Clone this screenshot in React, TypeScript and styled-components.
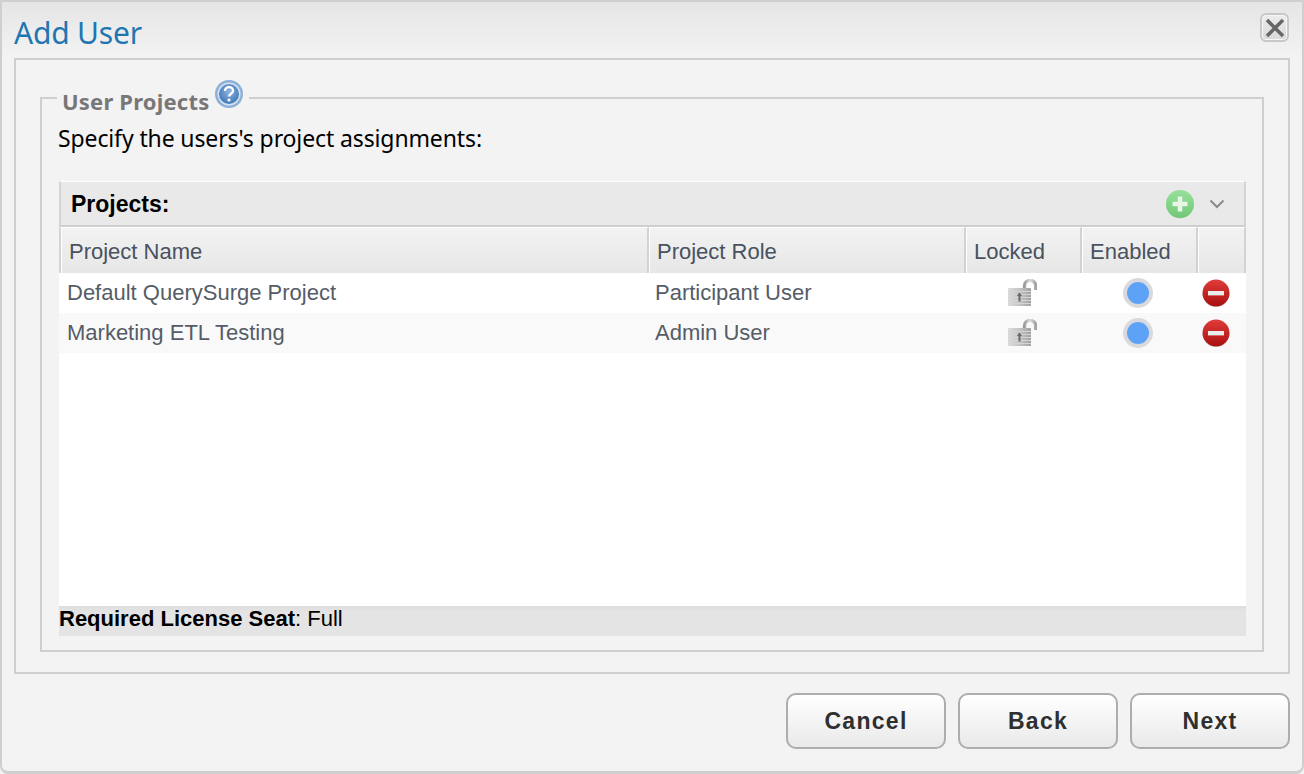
import styled, { createGlobalStyle } from 'styled-components';

const GlobalStyle = createGlobalStyle`
  html,
  body {
    margin: 0;
    padding: 0;
    background: #f3f3f3;
  }
  * {
    box-sizing: border-box;
  }
`;

const HEADER_COLUMNS = '590px 317px 116px 116px 48px';
const ROW_COLUMNS = '588px 317px 116px 116px 50px';
const ROW_FONT = '"Liberation Sans", Arial, sans-serif';
const TITLE_FONT = '"Noto Sans", "Open Sans", sans-serif';

const Dialog = styled.div`
  width: 1304px;
  height: 774px;
  border: solid #cfcfcf;
  border-width: 2px 2px 3px 2px;
  border-radius: 0 0 8px 8px;
  background: #f3f3f3;
  display: flex;
  flex-direction: column;
  overflow: hidden;
`;

const TitleBar = styled.div`
  height: 56px;
  padding: 0 12px;
  display: flex;
  justify-content: space-between;
  background: linear-gradient(#e5e5e5, #f3f3f3);
`;

const Title = styled.h1`
  margin: 11px 0 0;
  font: 400 30px/40px ${TITLE_FONT};
  letter-spacing: -0.2px;
  color: #1f76b1;
`;

const CloseButton = styled.button`
  width: 29px;
  height: 29px;
  margin: 11px 1px 0 0;
  padding: 0;
  border: 2px solid #c8c8c8;
  border-radius: 6px;
  background: linear-gradient(#ececec, #d8d8d8);
  box-shadow: inset 0 0 0 1px #f6f6f6;
  display: flex;
  align-items: center;
  justify-content: center;
`;

const Panel = styled.div`
  height: 616px;
  margin: 0 12px;
  padding: 24px 24px 20px;
  border: 2px solid #cfcfcf;
`;

const FieldSet = styled.fieldset`
  height: 568px;
  margin: 0;
  padding: 0 16px 14px 17px;
  border: 2px solid #cfcfcf;
  min-width: 0;
  display: flex;
  flex-direction: column;
`;

const Legend = styled.legend`
  padding: 0 5px 0 5px;
  margin-left: -2px;
  height: 28px;
  display: flex;
  align-items: flex-start;
  font: 700 22px/34px ${TITLE_FONT};
  color: #777;
  letter-spacing: 0.2px;
`;

const HelpIcon = styled.svg`
  width: 30px;
  height: 30px;
  margin: -5px 0 0 5px;
`;

const Intro = styled.p`
  margin: 8px 0 25px -1px;
  font: 400 23px/36px ${TITLE_FONT};
  letter-spacing: -0.12px;
  color: #000;
`;

const Grid = styled.div`
  flex: 1;
  display: flex;
  flex-direction: column;
  background: #fff;
`;

const GridCaption = styled.div`
  height: 46px;
  padding: 1px 19px 0 10px;
  border-top: 1px solid #fff;
  border-bottom: 2px solid #cfcfcf;
  border-left: 2px solid #d4d4d4;
  border-right: 2px solid #d4d4d4;
  background: #e9e9e9;
  display: flex;
  align-items: center;
  justify-content: space-between;
`;

const CaptionTitle = styled.span`
  font: 700 23px/28px ${ROW_FONT};
  color: #000;
`;

const CaptionTools = styled.div`
  display: flex;
  align-items: center;
  gap: 14px;
`;

const HeaderRow = styled.div`
  height: 46px;
  display: grid;
  grid-template-columns: ${HEADER_COLUMNS};
  border-bottom: 3px solid #cfcfcf;
`;

const HeaderCell = styled.div`
  padding-left: 7px;
  border-left: 1px solid #fff;
  border-top: 1px solid #fff;
  border-right: 2px solid #d2d2d2;
  background: linear-gradient(#f2f2f2, #e6e6e6);
  font: 400 22px/48px ${ROW_FONT};
  color: #495260;

  &:first-child {
    padding-left: 8px;
    border-left: 2px solid #d4d4d4;
    box-shadow: inset 1px 0 0 #fff;
  }
`;

const Row = styled.div<{ $alt?: boolean }>`
  height: 40px;
  display: grid;
  grid-template-columns: ${ROW_COLUMNS};
  align-items: center;
  background: ${({ $alt }) => ($alt ? '#f9f9f9' : '#fff')};
`;

const TextCell = styled.div`
  padding-left: 8px;
  font: 400 22px/40px ${ROW_FONT};
  color: #555c68;
`;

const IconCell = styled.div`
  display: flex;
  justify-content: center;
  align-items: center;
`;

const RemoveCell = styled(IconCell)`
  justify-content: flex-start;
  padding-left: 6px;
`;

const EnabledDot = styled.span`
  width: 30px;
  height: 30px;
  border-radius: 50%;
  background: #5ea2f8;
  border: 4px solid #d9dade;
`;

const Spacer = styled.div`
  flex: 1;
`;

const SeatBar = styled.div`
  height: 30px;
  background: linear-gradient(#dedede, #e4e4e4 20%);
  font: 400 22px/26px ${ROW_FONT};
  color: #000;

  b {
    font-weight: 700;
  }
`;

const Footer = styled.div`
  display: flex;
  justify-content: flex-end;
  gap: 12px;
  padding: 19px 12px 0;
`;

const Button = styled.button`
  width: 160px;
  height: 56px;
  border: 2px solid #adadad;
  border-radius: 10px;
  background: linear-gradient(#ffffff, #e9e9e9);
  font: 700 23px/1 ${ROW_FONT};
  letter-spacing: 1.3px;
  color: #2f2f2f;
`;

function CloseIcon() {
  return (
    <svg width="24" height="24" viewBox="0 0 24 24">
      <path d="M4 4 20 20M20 4 4 20" stroke="#666" strokeWidth="3.4" fill="none" />
    </svg>
  );
}

function AddIcon() {
  return (
    <svg width="30" height="30" viewBox="0 0 30 30">
      <defs>
        <linearGradient id="addFill" x1="0" y1="0" x2="0" y2="1">
          <stop offset="0" stopColor="#98e09a" />
          <stop offset="1" stopColor="#6fc876" />
        </linearGradient>
      </defs>
      <circle cx="15" cy="15.6" r="14" fill="#cfd8cf" />
      <circle cx="15" cy="15" r="14" fill="url(#addFill)" />
      <path d="M15 7.5v15M7.5 15h15" stroke="#e7f6e6" strokeWidth="4.6" fill="none" />
    </svg>
  );
}

function ChevronIcon() {
  return (
    <svg width="16" height="10" viewBox="0 0 16 10">
      <path d="M1.5 1.5 8 8l6.5-6.5" stroke="#8a8a8a" strokeWidth="2" fill="none" />
    </svg>
  );
}

function LockIcon() {
  return (
    <svg width="30" height="28" viewBox="0 0 30 28">
      <defs>
        <linearGradient id="lockBody" x1="0" y1="0" x2="1" y2="0">
          <stop offset="0" stopColor="#dcdcdc" />
          <stop offset="0.55" stopColor="#c2c2c2" />
          <stop offset="1" stopColor="#a0a0a0" />
        </linearGradient>
        <linearGradient id="lockShackle" x1="0" y1="0" x2="1" y2="0">
          <stop offset="0" stopColor="#9c9c9c" />
          <stop offset="0.5" stopColor="#dedede" />
          <stop offset="1" stopColor="#a2a2a2" />
        </linearGradient>
      </defs>
      <path
        d="M17.5 11V7a5.6 5.6 0 0 1 11.2 0v4"
        stroke="url(#lockShackle)"
        strokeWidth="3.4"
        fill="none"
      />
      <rect x="1" y="9" width="23" height="18" rx="1" fill="url(#lockBody)" />
      <path d="M1 12.5h23M1 15.5h23M1 18.5h23M1 21.5h23M1 24.5h23" stroke="#d4d4d4" strokeWidth="1" />
      <path d="M12.5 13.5 9.8 16.8h1.7v5.7h2v-5.7h1.7z" fill="#666" />
    </svg>
  );
}

function RemoveIcon() {
  return (
    <svg width="28" height="30" viewBox="0 0 28 30">
      <defs>
        <linearGradient id="removeFill" x1="0" y1="0" x2="0" y2="1">
          <stop offset="0" stopColor="#e23c3c" />
          <stop offset="1" stopColor="#a80f0f" />
        </linearGradient>
      </defs>
      <circle cx="14" cy="15.6" r="13.5" fill="#d8d8d8" />
      <circle cx="14" cy="15" r="13.5" fill="url(#removeFill)" />
      <rect x="6" y="13" width="16" height="4.4" fill="#ececec" />
    </svg>
  );
}

const projects = [
  { name: 'Default QuerySurge Project', role: 'Participant User' },
  { name: 'Marketing ETL Testing', role: 'Admin User' },
];

function App() {
  return (
    <>
      <GlobalStyle />
      <Dialog>
        <TitleBar>
          <Title>Add User</Title>
          <CloseButton aria-label="Close">
            <CloseIcon />
          </CloseButton>
        </TitleBar>
        <Panel>
          <FieldSet>
            <Legend>
              User Projects
              <HelpIcon viewBox="0 0 30 30">
                <defs>
                  <radialGradient id="helpFill" cx="0.5" cy="0.4" r="0.6">
                    <stop offset="0" stopColor="#8fb3dc" />
                    <stop offset="1" stopColor="#3f78b8" />
                  </radialGradient>
                </defs>
                <circle cx="15" cy="15" r="14" fill="#8eb0d6" />
                <circle cx="15" cy="15" r="11.5" fill="#d4e1f0" />
                <circle cx="15" cy="15" r="10" fill="url(#helpFill)" />
                <path
                  d="M11 12a4 4 0 0 1 8 0c0 2.6-4 2.8-4 5.6"
                  stroke="#fff"
                  strokeWidth="2.4"
                  fill="none"
                />
                <circle cx="15" cy="21" r="1.6" fill="#fff" />
              </HelpIcon>
            </Legend>
            <Intro>Specify the users's project assignments:</Intro>
            <Grid>
              <GridCaption>
                <CaptionTitle>Projects:</CaptionTitle>
                <CaptionTools>
                  <AddIcon />
                  <ChevronIcon />
                </CaptionTools>
              </GridCaption>
              <HeaderRow>
                <HeaderCell>Project Name</HeaderCell>
                <HeaderCell>Project Role</HeaderCell>
                <HeaderCell>Locked</HeaderCell>
                <HeaderCell>Enabled</HeaderCell>
                <HeaderCell />
              </HeaderRow>
              {projects.map((project, index) => (
                <Row key={project.name} $alt={index % 2 === 1}>
                  <TextCell>{project.name}</TextCell>
                  <TextCell>{project.role}</TextCell>
                  <IconCell>
                    <LockIcon />
                  </IconCell>
                  <IconCell>
                    <EnabledDot />
                  </IconCell>
                  <RemoveCell>
                    <RemoveIcon />
                  </RemoveCell>
                </Row>
              ))}
              <Spacer />
              <SeatBar>
                <b>Required License Seat</b>: Full
              </SeatBar>
            </Grid>
          </FieldSet>
        </Panel>
        <Footer>
          <Button>Cancel</Button>
          <Button>Back</Button>
          <Button>Next</Button>
        </Footer>
      </Dialog>
    </>
  );
}

export default App;
